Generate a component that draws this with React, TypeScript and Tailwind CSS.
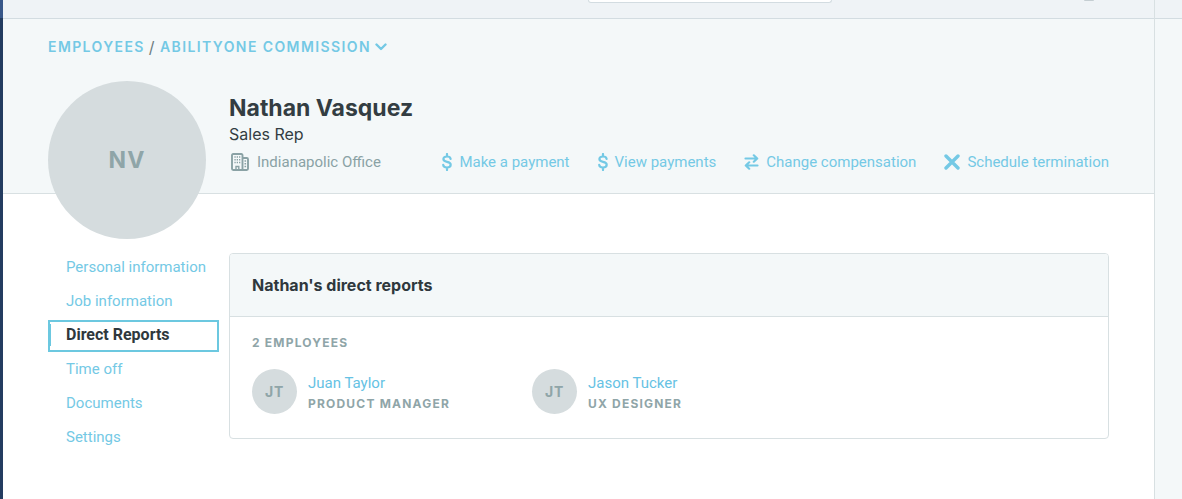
import type { ReactNode } from "react";
import { clsx } from "clsx";

interface Employee {
  name: string;
  initials: string;
  title: string;
}

const navItems = [
  "Personal information",
  "Job information",
  "Direct Reports",
  "Time off",
  "Documents",
  "Settings",
];

const reports: Employee[] = [
  { name: "Juan Taylor", initials: "JT", title: "Product Manager" },
  { name: "Jason Tucker", initials: "JT", title: "UX Designer" },
];

function ChevronIcon() {
  return (
    <svg width="12" height="8" viewBox="0 0 12 8" fill="none" aria-hidden="true">
      <path
        d="M1.5 1.5 6 6l4.5-4.5"
        stroke="currentColor"
        strokeWidth="2.4"
        strokeLinecap="round"
        strokeLinejoin="round"
      />
    </svg>
  );
}

function OfficeIcon() {
  return (
    <svg width="20" height="18" viewBox="-2 0 20 18" fill="none" aria-hidden="true">
      <path
        d="M11.5 5V2.2Q11.5 1 10.3 1H2.2Q1 1 1 2.2v13.6Q1 17 2.2 17h13.6q1.2 0 1.2-1.2V6.2Q17 5 15.8 5h-4.3v12"
        stroke="currentColor"
        strokeWidth="1.9"
        strokeLinejoin="round"
      />
      <path d="M5 17v-3.5h2.8V17" stroke="currentColor" strokeWidth="1.4" />
      <path
        d="M3.4 4h1.3M5.7 4H7M8 4h1.3M3.4 6.8h1.3M5.7 6.8H7M8 6.8h1.3M3.4 9.6h1.3M5.7 9.6H7M8 9.6h1.3M13.5 8h1.6M13.5 10.8h1.6M13.5 13.6h1.6"
        stroke="currentColor"
        strokeWidth="1.5"
      />
    </svg>
  );
}

function DollarIcon() {
  return (
    <svg width="10" height="18" viewBox="0 0 10 18" fill="none" aria-hidden="true">
      <path
        d="M8.6 5.9C8.4 4.3 7.1 3.5 5 3.5S1.4 4.4 1.4 6.1C1.4 7.9 2.8 8.5 5 8.9s3.7 1.1 3.7 2.9c0 1.7-1.4 2.7-3.7 2.7s-3.7-.9-3.8-2.7M5 1v2.5M5 14.5V17"
        stroke="currentColor"
        strokeWidth="2.2"
        strokeLinecap="round"
      />
    </svg>
  );
}

function SwapIcon() {
  return (
    <svg width="15" height="16" viewBox="0 0 15 16" fill="none" aria-hidden="true">
      <path
        d="M1.5 4.5H13M9.8 1.3l3.4 3.2-3.4 3.2M13.5 11.5H2M5.2 8.3l-3.4 3.2 3.4 3.2"
        stroke="currentColor"
        strokeWidth="2.2"
        strokeLinecap="round"
        strokeLinejoin="round"
      />
    </svg>
  );
}

function CloseIcon() {
  return (
    <svg width="16" height="16" viewBox="0 0 16 16" fill="none" aria-hidden="true">
      <path
        d="m2 2 12 12M14 2 2 14"
        stroke="currentColor"
        strokeWidth="3.4"
        strokeLinecap="round"
      />
    </svg>
  );
}

function ActionLink({ icon, children }: { icon: ReactNode; children: ReactNode }) {
  return (
    <a href="#" className="flex items-center gap-[7px] whitespace-nowrap text-[#74c9e5]">
      {icon}
      {children}
    </a>
  );
}

function ReportCard({ employee }: { employee: Employee }) {
  return (
    <li className="flex items-center gap-[11px]">
      <span className="flex size-[45px] shrink-0 items-center justify-center rounded-full bg-[#d5dcde] font-[Inter,sans-serif] text-sm font-bold tracking-wider text-[#8fa5a8]">
        {employee.initials}
      </span>
      <div>
        <a href="#" className="block leading-[22px] text-[#66c2e4]">
          {employee.name}
        </a>
        <p className="mt-0.5 font-[Inter,sans-serif] text-xs leading-4 font-bold tracking-widest text-[#8fa5a8] uppercase">
          {employee.title}
        </p>
      </div>
    </li>
  );
}

function TopBar() {
  return (
    <div className="flex h-[19px] items-start border-b border-[#d3dce1] bg-[#eff3f6]">
      <div className="ml-[50.8%] h-[3px] w-[244px] rounded-b border border-t-0 border-[#d3dce1] bg-white" />
      <div className="mr-[60px] ml-auto h-px w-2.5 rounded-b-full bg-[#c5ced2]" />
    </div>
  );
}

function ProfileHeader() {
  return (
    <header className="flex h-[175px] flex-col border-b border-[#d8e0e2] bg-[#f4f8f9] px-[45px] pt-[18px]">
      <nav
        aria-label="Breadcrumb"
        className="flex items-center gap-1 font-[Inter,sans-serif] text-sm leading-5 font-semibold tracking-widest text-[#74c9e5]"
      >
        <a href="#">EMPLOYEES</a>
        <span className="text-base leading-5 font-normal text-[#6f7d80]">/</span>
        <button type="button" className="flex items-center gap-1 tracking-widest">
          ABILITYONE COMMISSION
          <ChevronIcon />
        </button>
      </nav>

      <div className="mt-6 flex">
        <div className="w-[181px] shrink-0">
          {/* Hangs over the bottom edge of the header */}
          <div className="relative -mb-20 flex size-[158px] items-center justify-center rounded-full bg-[#d5dcde] font-[Inter,sans-serif] text-[23px] font-bold tracking-wider text-[#8fa5a8]">
            NV
          </div>
        </div>
        <div className="min-w-0 flex-1 pt-3">
          <h1 className="font-[Inter,sans-serif] text-[23px] leading-[30px] font-bold text-[#333d42]">
            Nathan Vasquez
          </h1>
          <p className="font-[Inter,sans-serif] text-base leading-[22px] text-[#333d42]">Sales Rep</p>
          <div className="mt-1.5 flex items-center justify-between gap-4 leading-[22px]">
            <span className="flex items-center gap-2 whitespace-nowrap text-[#8aa2a5]">
              <OfficeIcon />
              Indianapolic Office
            </span>
            <div className="flex items-center gap-7">
              <ActionLink icon={<DollarIcon />}>Make a payment</ActionLink>
              <ActionLink icon={<DollarIcon />}>View payments</ActionLink>
              <ActionLink icon={<SwapIcon />}>Change compensation</ActionLink>
              <ActionLink icon={<CloseIcon />}>Schedule termination</ActionLink>
            </div>
          </div>
        </div>
      </div>
    </header>
  );
}

function SideNav() {
  return (
    <nav aria-label="Profile" className="-mt-px w-[171px] shrink-0">
      <ul className="flex flex-col gap-0.5">
        {navItems.map((item) => {
          const isActive = item === "Direct Reports";
          return (
            <li key={item}>
              <a
                href="#"
                aria-current={isActive ? "page" : undefined}
                className={clsx(
                  "relative flex h-8 items-center border-2 pb-0.5 pl-4 whitespace-nowrap",
                  isActive
                    ? "border-[#6cc8e0] text-base font-bold text-[#2f383d]"
                    : "border-transparent text-[#74c9e5]"
                )}
              >
                {isActive && (
                  <span className="absolute top-0.5 bottom-1 left-0 w-px bg-[#6cc8e0]" />
                )}
                {item}
              </a>
            </li>
          );
        })}
      </ul>
    </nav>
  );
}

export default function App() {
  return (
    <div className="flex min-h-screen bg-white font-[Roboto,sans-serif] text-[15px]">
      <div className="w-[3px] shrink-0 bg-[#233c60]">
        <div className="h-[18px] bg-[#385789]" />
      </div>

      <main className="min-w-0 flex-1">
        <TopBar />
        <ProfileHeader />

        <div className="flex items-start gap-2.5 px-[45px] pt-[59px]">
          <SideNav />
          <section className="min-w-0 flex-1 overflow-hidden rounded border border-[#d8e0e2]">
            <h2 className="border-b border-[#d8e0e2] bg-[#f4f8f9] px-[22px] py-5 font-[Inter,sans-serif] text-base leading-[22px] font-bold text-[#2f383d]">
              Nathan's direct reports
            </h2>
            <div className="pt-[18px] pr-4 pb-6 pl-[22px]">
              <p className="font-[Inter,sans-serif] text-xs leading-4 font-bold tracking-widest text-[#8fa5a8]">
                2 EMPLOYEES
              </p>
              <ul className="mt-[18px] grid grid-cols-3">
                {reports.map((employee) => (
                  <ReportCard key={employee.name} employee={employee} />
                ))}
              </ul>
            </div>
          </section>
        </div>
      </main>

      <div className="w-7 shrink-0 border-l border-[#d8e0e2] bg-[#f4f8f9]">
        <div className="h-[19px] border-b border-[#d3dce1] bg-[#eff3f6]" />
      </div>
    </div>
  );
}
